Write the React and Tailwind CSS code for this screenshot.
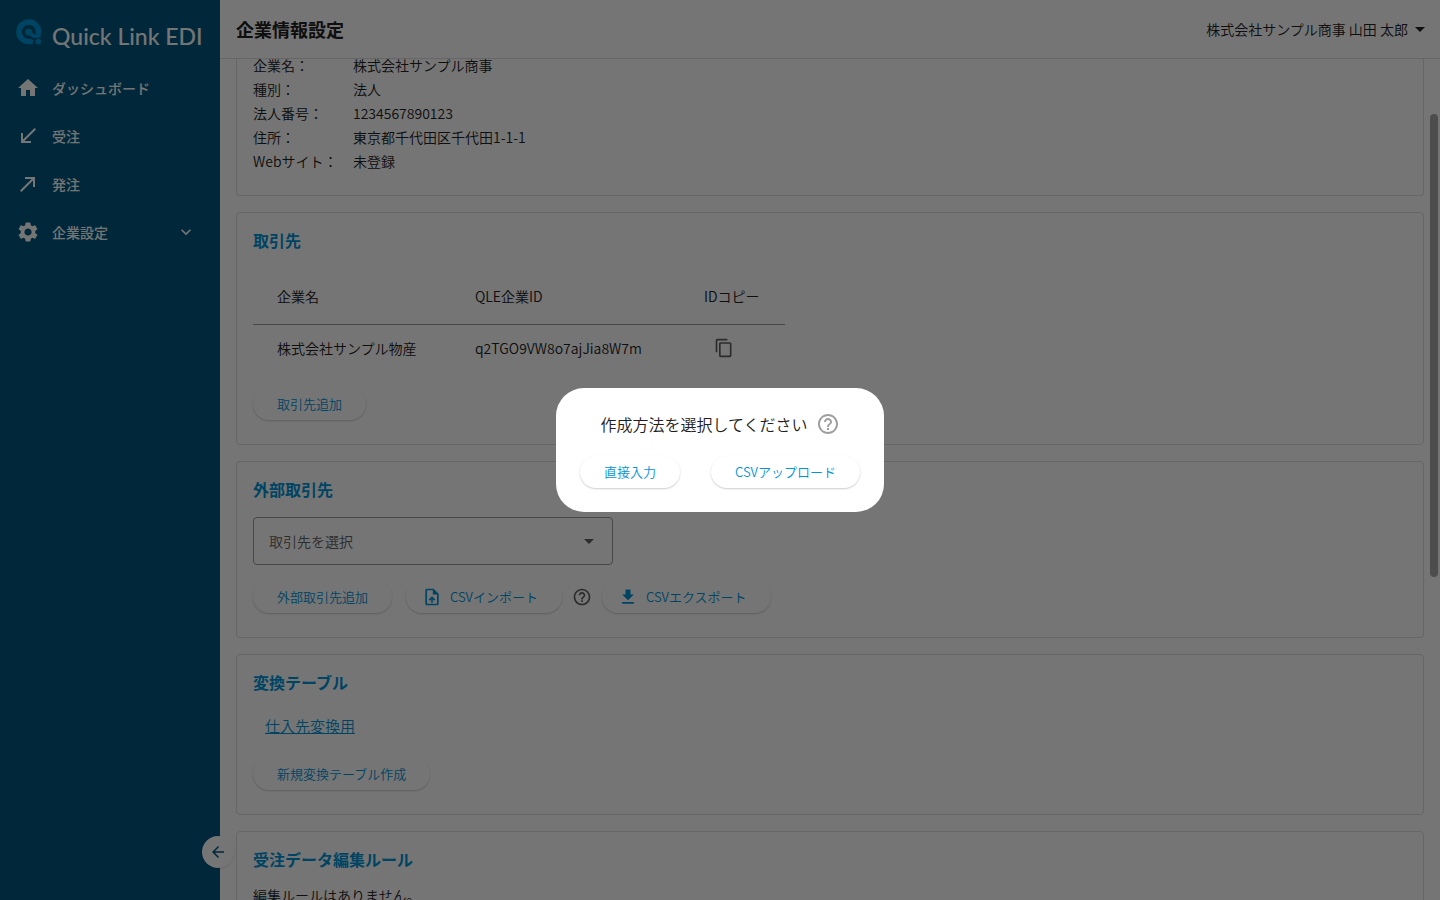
import React, { useState } from 'react';
import {
  MdHome,
  MdCallReceived,
  MdCallMade,
  MdSettings,
  MdExpandMore,
  MdArrowDropDown,
  MdArrowBack,
  MdContentCopy,
  MdHelpOutline,
  MdOutlineUploadFile,
  MdFileDownload,
} from 'react-icons/md';

const menuItems = [
  { label: 'ダッシュボード', icon: MdHome },
  { label: '受注', icon: MdCallReceived },
  { label: '発注', icon: MdCallMade },
  { label: '企業設定', icon: MdSettings, hasChildren: true },
];

const companyInfo = [
  { label: '企業名：', value: '株式会社サンプル商事' },
  { label: '種別：', value: '法人' },
  { label: '法人番号：', value: '1234567890123' },
  { label: '住所：', value: '東京都千代田区千代田1-1-1' },
  { label: 'Webサイト：', value: '未登録' },
];

const partners = [{ name: '株式会社サンプル物産', id: 'q2TGO9VW8o7ajJia8W7m' }];

const Logo = () => (
  <div className="flex h-16 items-center gap-[10px] pl-4">
    <svg viewBox="0 0 26 26" fill="none" className="size-[26px] shrink-0" aria-hidden="true">
      <path
        d="M14.5 22.600H12.600A9.800 9.800 0 1 1 22.500 14"
        stroke="#0095d9"
        strokeWidth="5.400"
        strokeLinecap="round"
      />
      <path d="M12.800 13.300L17.500 17L23 17" stroke="#0095d9" strokeWidth="3.600" strokeLinecap="round" strokeLinejoin="round" />
      <circle cx="12.600" cy="13" r="3.300" fill="#0095d9" />
      <circle cx="22.300" cy="22.500" r="2.800" fill="#0095d9" />
    </svg>
    <span className="pt-2 font-[Lato,sans-serif] text-[23px] leading-6 font-medium text-white">Quick Link EDI</span>
  </div>
);

const Sidebar = () => (
  <aside className="relative w-[220px] shrink-0 bg-[#00587f] text-white">
    <Logo />
    <nav>
      {menuItems.map(({ label, icon: Icon, hasChildren }) => (
        <a key={label} href="#" className="flex h-12 items-center gap-3 pl-4 pr-6 text-sm font-medium">
          <Icon size={24} />
          <span className="flex-1">{label}</span>
          {hasChildren && <MdExpandMore size={20} />}
        </a>
      ))}
    </nav>
    <button
      aria-label="メニューを閉じる"
      className="absolute bottom-8 -right-3.5 z-10 flex size-8 items-center justify-center rounded-full bg-white text-[#00587f] shadow"
    >
      <MdArrowBack size={18} />
    </button>
  </aside>
);

const Header = () => (
  <header className="flex h-[59px] shrink-0 items-center justify-between border-b border-[#dedede] pl-4 pr-2">
    <h1 className="text-lg font-bold">企業情報設定</h1>
    <button className="flex items-center text-sm">
      株式会社サンプル商事 山田 太郎
      <MdArrowDropDown size={24} />
    </button>
  </header>
);

const Card = ({ title, children }) => (
  <section className="rounded border border-[#dedede] px-4 pt-[15px] pb-4">
    <h2 className="text-base leading-6 font-bold text-[#0095d9]">{title}</h2>
    {children}
  </section>
);

const PillButton = ({ icon, children }) => (
  <button
    className={`flex h-8 items-center gap-2 rounded-full bg-white pr-6 text-[13px] text-[#0095d9] shadow-[0_1px_2px_rgba(0,0,0,0.2)] ${
      icon ? 'pl-4' : 'pl-6'
    }`}
  >
    {icon}
    {children}
  </button>
);

const CreateDialog = () => (
  <div className="fixed inset-0 z-20 flex items-center justify-center bg-black/54">
    <div role="dialog" aria-labelledby="dialog-title" className="w-[328px] rounded-[28px] bg-white p-6">
      <div className="flex h-6 items-center justify-center gap-2">
        <p id="dialog-title" className="text-base">作成方法を選択してください</p>
        <MdHelpOutline size={24} className="text-[#9e9e9e]" />
      </div>
      <div className="mt-5 flex justify-between">
        <PillButton>直接入力</PillButton>
        <PillButton>CSVアップロード</PillButton>
      </div>
    </div>
  </div>
);

const App = () => {
  const [partner, setPartner] = useState('');

  return (
    <div className="flex h-screen bg-white font-['Noto_Sans_CJK_JP',sans-serif] font-[350] text-[#212121]">
      <Sidebar />
      <div className="flex min-w-0 flex-1 flex-col">
        <Header />
        <main className="relative flex-1 overflow-hidden">
          <div className="-mt-1.5 flex flex-col gap-4 px-4">
            <section className="rounded-b border border-t-0 border-[#dedede] px-4 pb-[22px]">
              <dl className="text-sm leading-6">
                {companyInfo.map((info) => (
                  <div key={info.label} className="flex">
                    <dt className="w-[100px]">{info.label}</dt>
                    <dd>{info.value}</dd>
                  </div>
                ))}
              </dl>
            </section>

            <Card title="取引先">
              <table className="mt-4 mb-4 w-[532px] table-fixed text-left text-sm">
                <thead>
                  <tr className="h-14 border-b border-[#9e9e9e]">
                    <th className="w-[198px] px-6 font-[350]">企業名</th>
                    <th className="w-[229px] px-6 font-[350]">QLE企業ID</th>
                    <th className="px-6 font-[350]">IDコピー</th>
                  </tr>
                </thead>
                <tbody>
                  {partners.map((p) => (
                    <tr key={p.id} className="h-12">
                      <td className="px-6">{p.name}</td>
                      <td className="px-6">{p.id}</td>
                      <td className="px-6">
                        <button aria-label="IDコピー" className="flex size-10 items-center justify-center text-[#616161]">
                          <MdContentCopy size={20} />
                        </button>
                      </td>
                    </tr>
                  ))}
                </tbody>
              </table>
              <div className="flex pb-2">
                <PillButton>取引先追加</PillButton>
              </div>
            </Card>

            <Card title="外部取引先">
              <div className="relative mt-4 w-[360px]">
                <select
                  aria-label="取引先を選択"
                  value={partner}
                  onChange={(e) => setPartner(e.target.value)}
                  className="h-12 w-full appearance-none rounded border border-[#9e9e9e] px-[15px] text-sm text-[#616161]"
                >
                  <option value="">取引先を選択</option>
                </select>
                <MdArrowDropDown size={24} className="pointer-events-none absolute top-3 right-3 text-[#616161]" />
              </div>
              <div className="mt-4 flex items-center pb-2">
                <PillButton>外部取引先追加</PillButton>
                <div className="ml-3.5 flex items-center gap-2.5">
                  <PillButton icon={<MdOutlineUploadFile size={20} />}>CSVインポート</PillButton>
                  <MdHelpOutline size={20} className="text-[#616161]" />
                  <PillButton icon={<MdFileDownload size={20} />}>CSVエクスポート</PillButton>
                </div>
              </div>
            </Card>

            <Card title="変換テーブル">
              <a href="#" className="mt-5 ml-3 inline-block text-[15px] leading-6 text-[#0095d9] underline">
                仕入先変換用
              </a>
              <div className="mt-5 flex pb-2">
                <PillButton>新規変換テーブル作成</PillButton>
              </div>
            </Card>

            <Card title="受注データ編集ルール">
              <p className="mt-3 text-sm leading-6">編集ルールはありません。</p>
            </Card>
          </div>
          <div className="absolute top-[55px] right-0.5 h-[463px] w-2 rounded-full bg-[#a8a8a8]" />
        </main>
      </div>
      <CreateDialog />
    </div>
  );
};

export default App;
